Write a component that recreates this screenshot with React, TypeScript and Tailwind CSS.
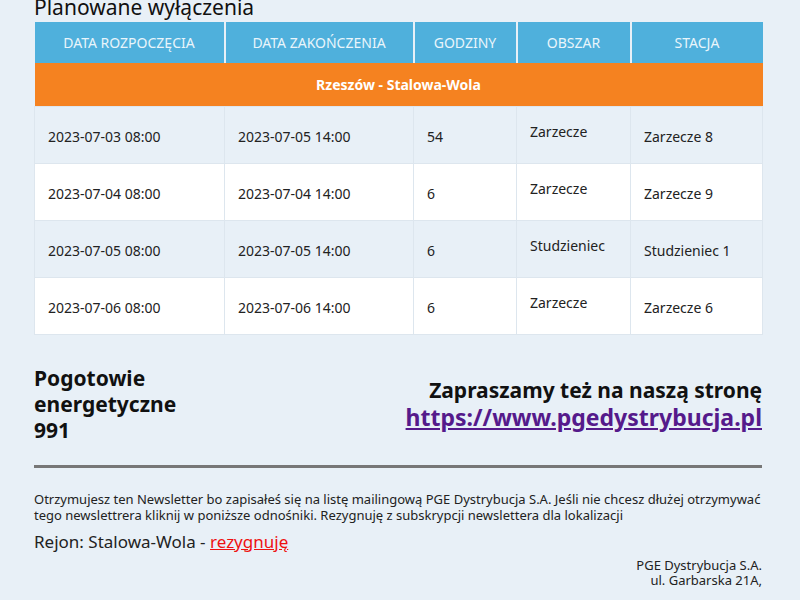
export default function App() {
  const rows = [
    ["2023-07-03 08:00", "2023-07-05 14:00", "54", "Zarzecze", "Zarzecze 8"],
    ["2023-07-04 08:00", "2023-07-04 14:00", "6", "Zarzecze", "Zarzecze 9"],
    ["2023-07-05 08:00", "2023-07-05 14:00", "6", "Studzieniec", "Studzieniec 1"],
    ["2023-07-06 08:00", "2023-07-06 14:00", "6", "Zarzecze", "Zarzecze 6"],
  ];
  const heads = ["DATA ROZPOCZĘCIA", "DATA ZAKOŃCZENIA", "GODZINY", "OBSZAR", "STACJA"];
  const widths = ["w-[190px]", "w-[189px]", "w-[103px]", "w-[114px]", "w-[132px]"];

  return (
    <div className="w-[800px] h-[600px] overflow-hidden bg-[#e8f0f7] text-[#222] font-[family-name:'DejaVu_Sans',sans-serif]">
      <div className="mx-[34px] w-[728px]">
        <h1 className="mt-[-7px] h-[29px] text-[21px] leading-[28px] text-[#111]">
          Planowane wyłączenia
        </h1>
        <table className="w-full border-collapse text-[14px] table-fixed">
          <thead>
            <tr className="bg-[#4fb0dc] h-[41px]">
              {heads.map((h, i) => (
                <th key={h} className={`${widths[i]} font-normal text-[#e9f5fb] text-[14px] border-r-2 border-[#e8f0f7] last:border-r-0`}>
                  {h}
                </th>
              ))}
            </tr>
          </thead>
          <tbody>
            <tr className="bg-[#f58220] h-[43px]">
              <td colSpan={5} className="text-center font-bold text-white text-[14px]">
                Rzeszów - Stalowa-Wola
              </td>
            </tr>
            {rows.map((r, ri) => (
              <tr key={ri} className={`h-[57px] ${ri % 2 === 0 ? "bg-[#e8f0f7]" : "bg-white"}`}>
                {r.map((c, ci) => (
                  <td
                    key={ci}
                    className={`px-[13px] border border-[#dde6ee] whitespace-nowrap ${ci === 3 ? "align-top pt-[14px]" : "align-middle pt-[4px]"}`}
                  >
                    {c}
                  </td>
                ))}
              </tr>
            ))}
          </tbody>
        </table>

        <div className="flex justify-between items-start mt-[29px] h-[100px]">
          <div className="text-[21px] font-bold leading-[26px] text-[#111] pt-[1px]">
            Pogotowie<br />energetyczne<br />991
          </div>
          <div className="text-right pt-[13px]">
            <div className="text-[21px] font-bold leading-[26px] text-[#111]">Zapraszamy też na naszą stronę</div>
            <a href="#" className="text-[23px] font-bold leading-[28px] text-[#551a8b] underline">
              https://www.pgedystrybucja.pl
            </a>
          </div>
        </div>

        <div className="h-[3px] bg-[#777] mt-[1px]" />

        <p className="mt-[23px] text-[13px] leading-[16px] text-[#222] font-[family-name:'DejaVu_Sans_Condensed',sans-serif]">
          Otrzymujesz ten Newsletter bo zapisałeś się na listę mailingową PGE Dystrybucja S.A. Jeśli nie chcesz dłużej otrzymywać tego newslettrera kliknij w poniższe odnośniki. Rezygnuję z subskrypcji newslettera dla lokalizacji
        </p>
        <p className="mt-[8px] text-[17px] leading-[22px] font-[family-name:'Liberation_Sans',sans-serif]">
          Rejon: Stalowa-Wola - <a href="#" className="text-[#ee1111] underline">rezygnuję</a>
        </p>
        <div className="text-right text-[13px] leading-[15px] mt-[5px] font-[family-name:'DejaVu_Sans_Condensed',sans-serif]">
          PGE Dystrybucja S.A.<br />ul. Garbarska 21A,
        </div>
      </div>
    </div>
  );
}
